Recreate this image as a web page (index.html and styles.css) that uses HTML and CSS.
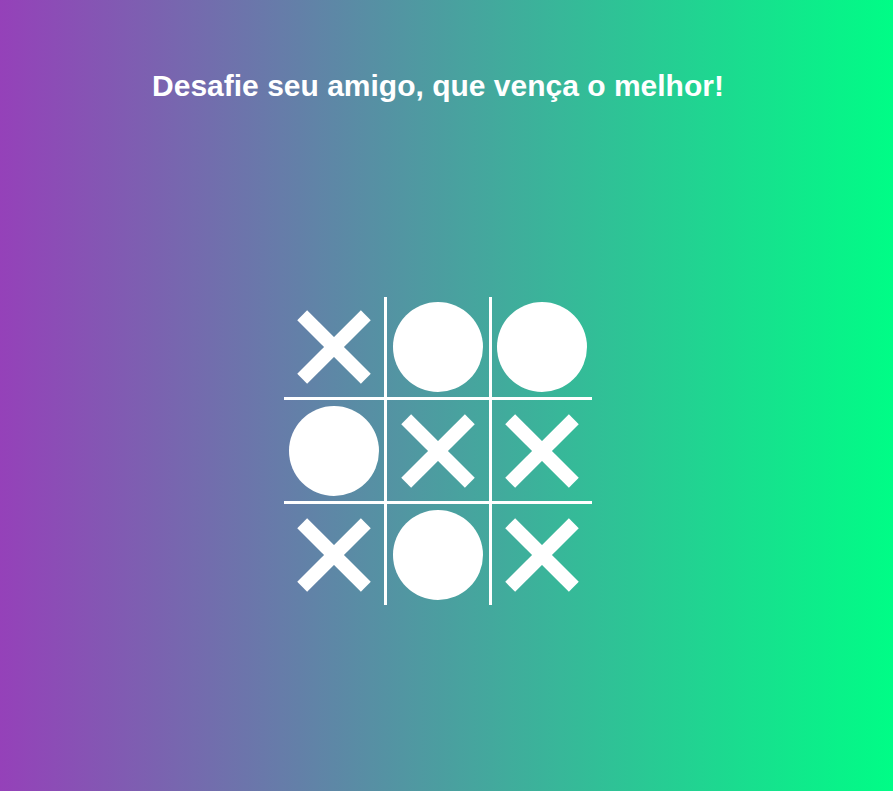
FILE: index.html
```html
<!DOCTYPE html>
<html lang="pt-BR">
<head>
<meta charset="utf-8">
<title>Jogo da Velha</title>
<link rel="stylesheet" href="styles.css">
</head>
<body>
<main class="page">
  <h1 class="title">Desafie seu amigo, que vença o melhor!</h1>
  <div class="board">
    <div class="cell c1 r1 x"></div>
    <div class="cell c2 r1 o"></div>
    <div class="cell c3 r1 o"></div>
    <div class="cell c1 r2 o"></div>
    <div class="cell c2 r2 x"></div>
    <div class="cell c3 r2 x"></div>
    <div class="cell c1 r3 x"></div>
    <div class="cell c2 r3 o"></div>
    <div class="cell c3 r3 x"></div>
  </div>
</main>
</body>
</html>
```
FILE: styles.css
```css
html, body {
  margin: 0;
  padding: 0;
  height: 100%;
}
body {
  background: linear-gradient(to right, #9541b9, #00fd86);
  font-family: "Liberation Sans", Arial, sans-serif;
  color: #fff;
  overflow: hidden;
}
.page {
  box-sizing: border-box;
  padding: 67px 17px 0 0;
  display: flex;
  flex-direction: column;
  align-items: center;
}
.title {
  margin: 0;
  font-size: 30px;
  font-weight: bold;
  line-height: 38px;
}
.board {
  margin-top: 192px;
  display: grid;
  grid-template-columns: 103px 105px 100px;
  grid-template-rows: 103px 104px 101px;
}
.cell {
  box-sizing: border-box;
  position: relative;
  display: flex;
  align-items: center;
  justify-content: center;
}
.c1, .c2 { border-right: 3px solid #fff; }
.r1, .r2 { border-bottom: 3px solid #fff; }
.o::before {
  content: "";
  width: 90px;
  height: 90px;
  border-radius: 50%;
  background: #fff;
}
.x::before, .x::after {
  content: "";
  position: absolute;
  width: 14px;
  height: 90px;
  background: #fff;
}
.x::before { transform: rotate(45deg); }
.x::after { transform: rotate(-45deg); }
```
